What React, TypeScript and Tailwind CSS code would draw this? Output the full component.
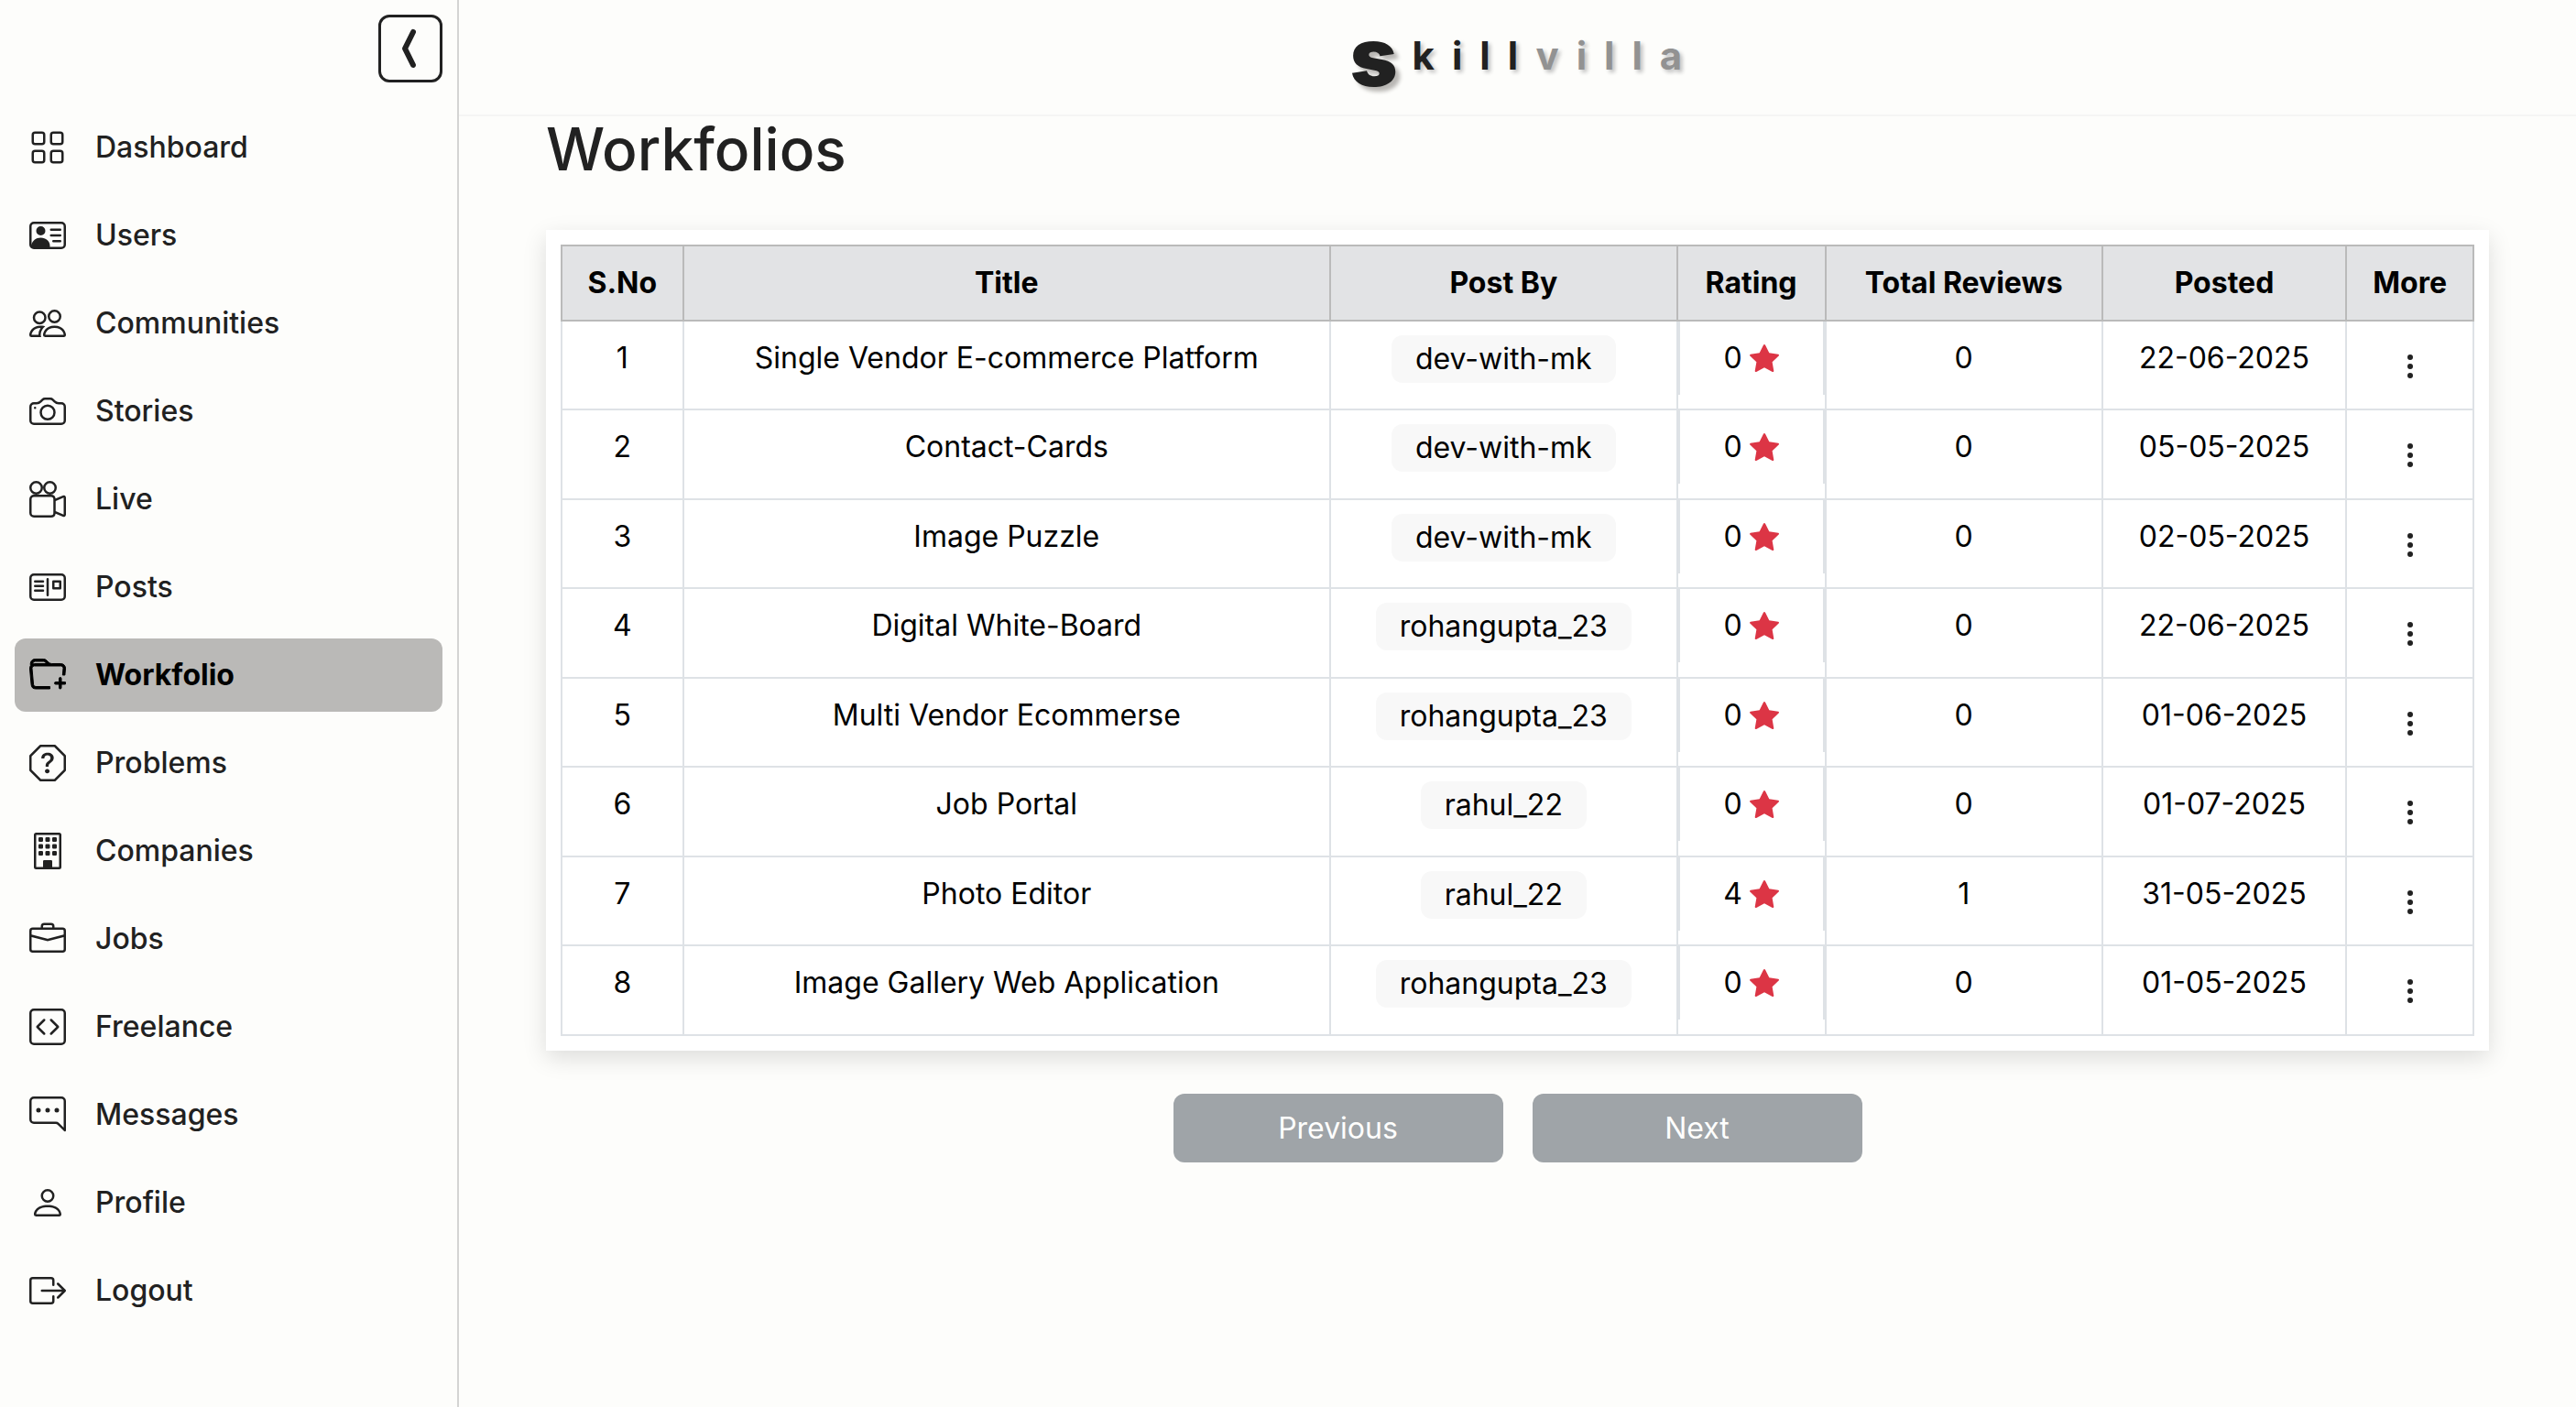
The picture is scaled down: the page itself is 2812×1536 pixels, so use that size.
import React from "react";
import type { IconType } from "react-icons";
import {
  BsBoxArrowRight,
  BsBriefcase,
  BsBuilding,
  BsCamera,
  BsCameraReels,
  BsChatRightDots,
  BsChevronCompactLeft,
  BsCodeSquare,
  BsFolderPlus,
  BsGrid,
  BsPeople,
  BsPerson,
  BsPersonVcard,
  BsPostcard,
  BsQuestionOctagon,
  BsStarFill,
  BsThreeDotsVertical,
} from "react-icons/bs";

type NavItem = { label: string; icon: IconType; active?: boolean };

const navItems: NavItem[] = [
  { label: "Dashboard", icon: BsGrid },
  { label: "Users", icon: BsPersonVcard },
  { label: "Communities", icon: BsPeople },
  { label: "Stories", icon: BsCamera },
  { label: "Live", icon: BsCameraReels },
  { label: "Posts", icon: BsPostcard },
  { label: "Workfolio", icon: BsFolderPlus, active: true },
  { label: "Problems", icon: BsQuestionOctagon },
  { label: "Companies", icon: BsBuilding },
  { label: "Jobs", icon: BsBriefcase },
  { label: "Freelance", icon: BsCodeSquare },
  { label: "Messages", icon: BsChatRightDots },
  { label: "Profile", icon: BsPerson },
  { label: "Logout", icon: BsBoxArrowRight },
];

type Workfolio = {
  title: string;
  author: string;
  rating: number;
  reviews: number;
  posted: string;
};

const workfolios: Workfolio[] = [
  { title: "Single Vendor E-commerce Platform", author: "dev-with-mk", rating: 0, reviews: 0, posted: "22-06-2025" },
  { title: "Contact-Cards", author: "dev-with-mk", rating: 0, reviews: 0, posted: "05-05-2025" },
  { title: "Image Puzzle", author: "dev-with-mk", rating: 0, reviews: 0, posted: "02-05-2025" },
  { title: "Digital White-Board", author: "rohangupta_23", rating: 0, reviews: 0, posted: "22-06-2025" },
  { title: "Multi Vendor Ecommerse", author: "rohangupta_23", rating: 0, reviews: 0, posted: "01-06-2025" },
  { title: "Job Portal", author: "rahul_22", rating: 0, reviews: 0, posted: "01-07-2025" },
  { title: "Photo Editor", author: "rahul_22", rating: 4, reviews: 1, posted: "31-05-2025" },
  { title: "Image Gallery Web Application", author: "rohangupta_23", rating: 0, reviews: 0, posted: "01-05-2025" },
];

const columns = ["S.No", "Title", "Post By", "Rating", "Total Reviews", "Posted", "More"];

function Sidebar() {
  return (
    <aside className="flex w-[501px] shrink-0 flex-col border-r-2 border-[#d4d4d3] px-4 pt-4">
      <button
        type="button"
        aria-label="Collapse sidebar"
        className="flex h-[74px] w-[70px] items-center justify-center self-end rounded-xl border-3 border-[#212121]"
      >
        <BsChevronCompactLeft className="size-12" stroke="currentColor" strokeWidth={1} />
      </button>
      <nav className="mt-[31px] flex flex-col gap-4">
        {navItems.map(({ label, icon: Icon, active }) => (
          <a
            key={label}
            href="#"
            aria-current={active ? "page" : undefined}
            className={
              active
                ? "flex items-center gap-8 rounded-xl bg-[#bab9b7] p-4 font-bold text-black"
                : "flex items-center gap-8 rounded-xl p-4 font-medium"
            }
          >
            <Icon className="size-10" stroke="currentColor" strokeWidth={active ? 0.4 : 0} />
            <span>{label}</span>
          </a>
        ))}
      </nav>
    </aside>
  );
}

function Logo() {
  return (
    <a href="#" className="flex items-start gap-4 pl-4" aria-label="Skillvilla">
      <span className="text-[88px] leading-[80px] font-black [text-shadow:5px_5px_4px_#b9b7b4]">s</span>
      <span className="mt-2.5 text-[42px] leading-[58px] font-bold tracking-[19px] [text-shadow:3px_3px_4px_#c0c0c0]">
        kill<span className="text-[#929292]">villa</span>
      </span>
    </a>
  );
}

function WorkfolioTable() {
  return (
    <div className="bg-white p-4 shadow-[0_8px_24px_rgba(0,0,0,0.13)]">
      <table className="w-full border-collapse text-center text-black">
        <thead className="bg-[#e2e3e5]">
          <tr>
            {columns.map((column) => (
              <th key={column} scope="col" className="border-2 border-[#bababa] p-4 font-bold">
                {column}
              </th>
            ))}
          </tr>
        </thead>
        <tbody className="align-top">
          {workfolios.map((item, index) => (
            <tr key={item.title} className="odd:h-[97px] even:h-[98px]">
              <td className="border-2 border-[#dee2e6] p-4">{index + 1}</td>
              <td className="border-2 border-[#dee2e6] p-4">{item.title}</td>
              <td className="border-2 border-[#dee2e6] px-4 pt-[15px]">
                <span className="inline-block rounded-xl bg-[#f8f8f8] px-[26px] py-0.5">{item.author}</span>
              </td>
              <td className="border-2 border-[#dee2e6] p-0">
                <div className="flex h-20 items-center justify-center gap-2 border-x-2 border-[#dee2e6] px-4">
                  {item.rating}
                  <BsStarFill className="size-8 text-[#dc3545]" />
                </div>
              </td>
              <td className="border-2 border-[#dee2e6] p-4">{item.reviews}</td>
              <td className="border-2 border-[#dee2e6] p-4">{item.posted}</td>
              <td className="border-2 border-[#dee2e6] px-4 pt-4">
                <button
                  type="button"
                  aria-label={`More actions for ${item.title}`}
                  className="mx-auto flex h-[66px] items-center text-[#212121]"
                >
                  <BsThreeDotsVertical className="size-8" />
                </button>
              </td>
            </tr>
          ))}
        </tbody>
      </table>
    </div>
  );
}

function Pagination() {
  return (
    <div className="mt-[47px] flex justify-center gap-8">
      {["Previous", "Next"].map((label) => (
        <button key={label} type="button" className="h-[75px] w-[360px] rounded-xl bg-[#9fa4a8] text-[#fefefd]">
          {label}
        </button>
      ))}
    </div>
  );
}

export default function App() {
  return (
    <div className="flex min-h-screen bg-[#fdfdfb] font-[Inter,sans-serif] text-[32px] leading-12 text-[#212121]">
      <Sidebar />
      <div className="flex-1">
        <header className="flex h-[127px] justify-center border-b-2 border-[#f5f5f4] pt-[22px]">
          <Logo />
        </header>
        <main className="px-[95px]">
          <h1 className="mb-[52px] text-[64px] leading-[72px] font-medium">Workfolios</h1>
          <WorkfolioTable />
          <Pagination />
        </main>
      </div>
    </div>
  );
}
